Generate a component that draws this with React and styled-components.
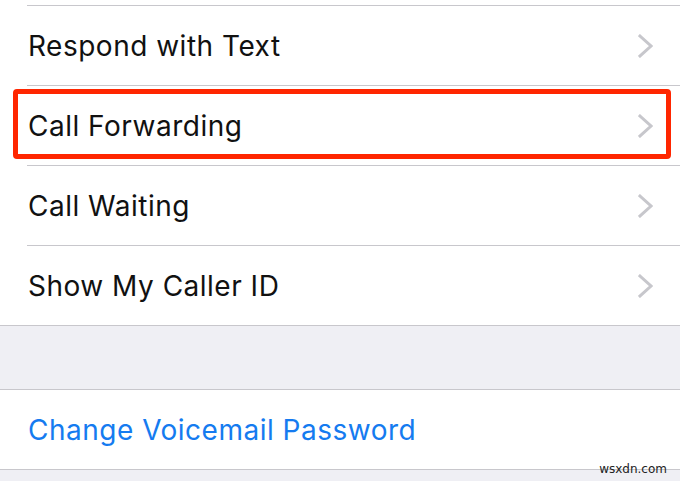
import React from 'react';
import styled, { createGlobalStyle } from 'styled-components';

const GlobalStyle = createGlobalStyle`
  html, body {
    margin: 0;
    padding: 0;
    background: #efeff4;
  }
  body {
    font-family: Inter, "Liberation Sans", Arial, sans-serif;
    -webkit-font-smoothing: antialiased;
  }
`;

const Screen = styled.div`
  position: relative;
  width: 680px;
  height: 481px;
  overflow: hidden;
  background: #efeff4;
`;

const Group = styled.div`
  background: #fff;
  border-bottom: 1px solid #c8c7cc;
  border-top: ${p => (p.$top ? '1px solid #c8c7cc' : 'none')};
`;

const TopEdge = styled.div`
  height: 5px;
  background: #fff;
`;

const Row = styled.div`
  position: relative;
  display: flex;
  align-items: center;
  height: 79px;
  margin-left: ${p => (p.$inset ? '27px' : '0')};
  padding-left: ${p => (p.$inset ? '1px' : '28px')};
  padding-right: 27px;
  border-top: ${p => (p.$line ? '1px solid #c8c7cc' : 'none')};
`;

const Label = styled.span`
  flex: 1;
  font-size: 28px;
  color: ${p => (p.$link ? '#157bf0' : '#111')};
  letter-spacing: 0.5px;
`;

const Spacer = styled.div`
  height: 63px;
`;

const Highlight = styled.div`
  position: absolute;
  left: -14px;
  right: 9px;
  top: 3px;
  height: 60px;
  border: 5px solid #ff2600;
  border-radius: 4px;
  pointer-events: none;
`;

const Watermark = styled.div`
  position: absolute;
  right: 13px;
  bottom: 5px;
  font-family: "DejaVu Sans", sans-serif;
  font-size: 12px;
  color: #222;
`;

const Chevron = () => (
  <svg width="15" height="24" viewBox="0 0 15 24">
    <path d="M2 2 L13 12 L2 22" fill="none" stroke="#c7c7cc" strokeWidth="3" strokeLinecap="square" />
  </svg>
);

const items = ['Respond with Text', 'Call Forwarding', 'Call Waiting', 'Show My Caller ID'];

export default function App() {
  return (
    <Screen>
      <GlobalStyle />
      <TopEdge />
      <Group>
        {items.map(text => (
          <Row key={text} $inset $line>
            <Label>{text}</Label>
            <Chevron />
            {text === 'Call Forwarding' && <Highlight />}
          </Row>
        ))}
      </Group>
      <Spacer />
      <Group $top>
        <Row>
          <Label $link>Change Voicemail Password</Label>
        </Row>
      </Group>
      <Watermark>wsxdn.com</Watermark>
    </Screen>
  );
}
